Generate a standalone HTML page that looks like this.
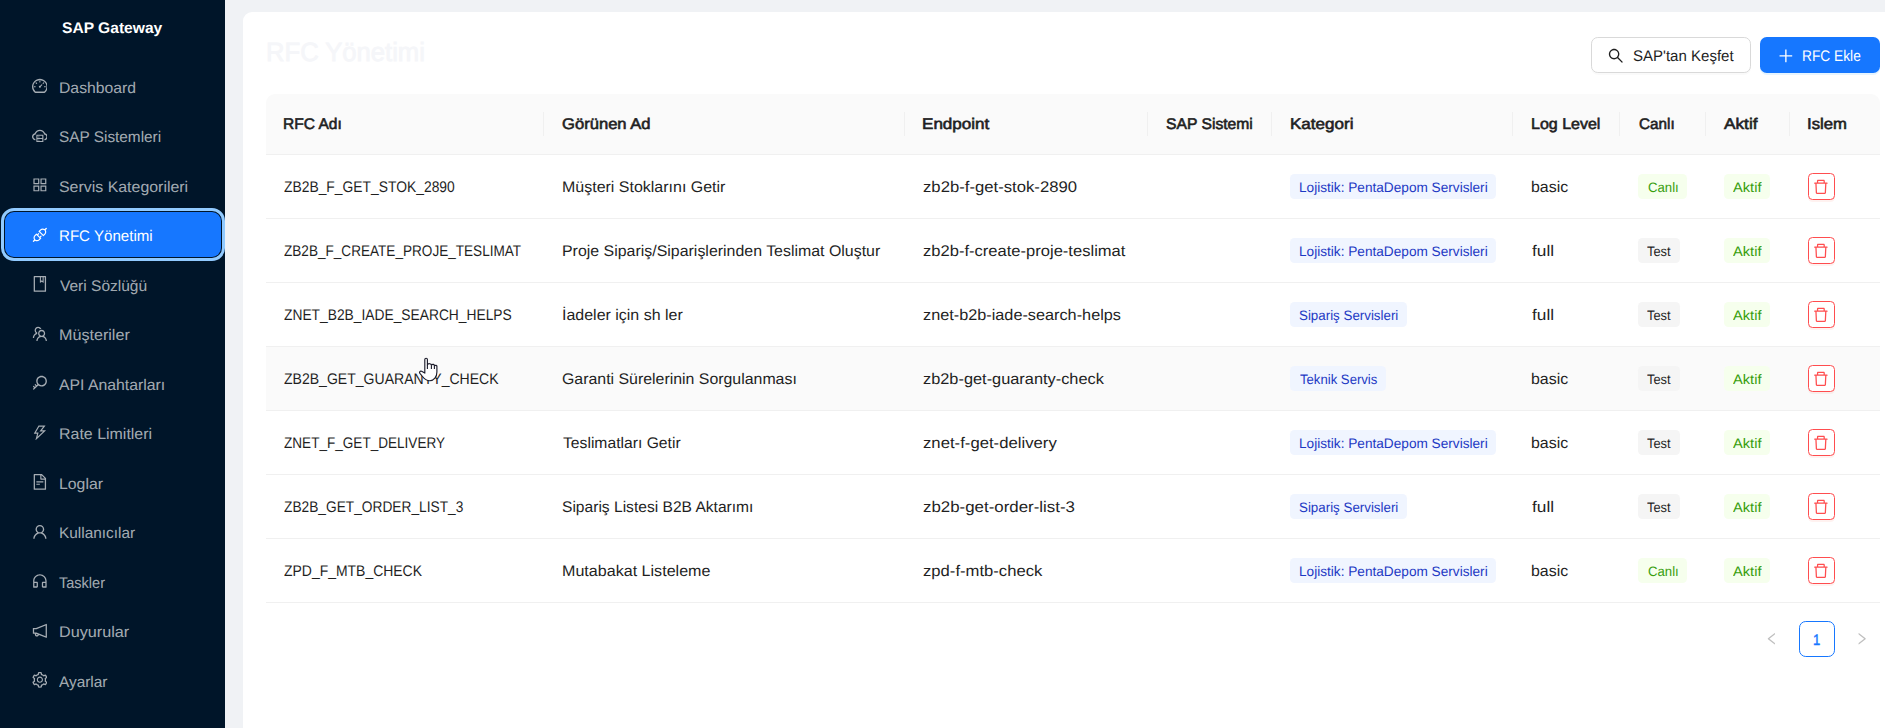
<!DOCTYPE html>
<html lang="tr"><head><meta charset="utf-8"><title>SAP Gateway - RFC Yönetimi</title><style>
*{box-sizing:border-box}
html,body{margin:0;padding:0}
body{width:1885px;height:728px;overflow:hidden;background:#f0f2f5;font-family:"Liberation Sans", sans-serif;position:relative;color:#1f1f1f}
.t{position:absolute;white-space:nowrap;line-height:20px;height:20px;display:block;transform-origin:0 50%;text-rendering:geometricPrecision}
.b{font-size:15.4px}
.h{font-size:15.4px;-webkit-text-stroke:.6px #1f1f1f}
.m{font-size:15.4px;color:rgba(255,255,255,.65)}
.ms{font-size:15.4px;color:#fff}
.lg{font-size:15.4px;font-weight:700;color:#fff}
.tg{font-size:13.7px}
.ti{font-size:26.4px;color:#f5f6f9;-webkit-text-stroke:.8px #f5f6f9;line-height:32px;height:32px}
.bt{font-size:15.4px}
.pg{font-size:15.4px;color:#1677ff;-webkit-text-stroke:.45px #1677ff}
aside{position:absolute;left:0;top:0;width:225px;height:728px;background:#001529}
.mi{position:absolute;left:4.5px;width:216px;height:45px;border-radius:9px}
.mi.sel{background:#1677ff;outline:3.4px solid #91caff;outline-offset:1.1px}
.mi .ic{position:absolute;left:27px;top:14.6px}
main{position:absolute;left:243px;top:12px;width:1700px;height:760px;background:#fff;border-radius:9px}
.btn{position:absolute;top:25px;height:36px;border-radius:6.75px}
.btn.def{left:1348px;width:160px;background:#fff;border:1px solid #d9d9d9;box-shadow:0 2px 0 rgba(0,0,0,.02)}
.btn.pri{left:1517px;width:120px;background:#1677ff;box-shadow:0 2px 0 rgba(5,145,255,.1);color:#fff}
.btn .ic{position:absolute;top:10px}
.tbl{position:absolute;left:23px;top:82px;width:1614px}
.thead{position:absolute;left:0;top:0;width:1614px;height:61px;background:#fafafa;border-bottom:1px solid #f0f0f0;border-radius:9px 9px 0 0}
.sep{position:absolute;top:18px;width:1px;height:24px;background:#f0f0f0}
.tr{position:absolute;left:0;width:1614px;height:64px;border-bottom:1px solid #f0f0f0}
.tr.hov{background:#fafafa}
.tag{position:absolute;top:19px;height:25px;border-radius:4.5px}
.tag.gb{background:#f0f5ff;color:#1d39c4}
.tag.gr{background:#f6ffed;color:#389e0d}
.tag.df{background:#f5f5f5;color:#1f1f1f}
.del{position:absolute;left:1542px;top:18px;width:27px;height:27px;border:1px solid #ff4d4f;border-radius:4.5px;background:#fff;box-shadow:0 2px 0 rgba(255,38,5,.06)}
.del .ic{position:absolute;left:4.1px;top:5.1px}
.pag{position:absolute;top:609px;left:1511px;width:126px;height:36px}
.pag .cur{position:absolute;left:45px;top:0;width:36px;height:36px;border:1px solid #1677ff;border-radius:6.75px;background:#fff}
.pag .ic{position:absolute;top:10.85px}
.cursor{position:absolute;left:175px;top:345px}
</style></head><body><aside><div class="logo"><span class="t lg" id="logo" style="left:62.00px;top:19.00px;transform:scaleX(1.0133);">SAP Gateway</span></div><nav><div class="mi" style="top:63.5px"><svg class="ic" viewBox="64 64 896 896" width="15.75" height="15.75" fill="rgba(255,255,255,.65)" style="" aria-hidden="true"><path d="M924.8 385.600a446.700 446.700 0 00-96-142.400 446.700 446.700 0 00-142.400-96C631.100 123.800 572.500 112 512 112s-119.100 11.800-174.400 35.200a446.700 446.700 0 00-142.400 96 446.700 446.700 0 00-96 142.400C75.800 440.900 64 499.500 64 560c0 132.700 58.300 257.700 159.900 343.100l1.700 1.400c5.800 4.800 13.100 7.500 20.600 7.500h531.700c7.500 0 14.800-2.700 20.600-7.500l1.700-1.400C901.700 817.700 960 692.700 960 560c0-60.500-11.900-119.100-35.200-174.400zM761.400 836H262.600A371.120 371.120 0 01140 560c0-99.400 38.700-192.800 109-263 70.300-70.300 163.700-109 263-109 99.400 0 192.800 38.700 263 109 70.300 70.300 109 163.700 109 263 0 105.600-44.500 205.500-122.600 276zM623.500 421.500a8.030 8.030 0 00-11.300 0L527.700 506c-18.700-5-39.400-.2-54.100 14.500a55.950 55.950 0 000 79.200 55.950 55.950 0 0079.200 0 55.870 55.870 0 0014.500-54.100l84.500-84.500c3.100-3.100 3.100-8.200 0-11.300l-28.300-28.300zM490 320h44c4.400 0 8-3.600 8-8v-80c0-4.400-3.600-8-8-8h-44c-4.400 0-8 3.600-8 8v80c0 4.400 3.600 8 8 8zm260 218v44c0 4.400 3.600 8 8 8h80c4.400 0 8-3.600 8-8v-44c0-4.400-3.600-8-8-8h-80c-4.400 0-8 3.600-8 8zm12.700-197.200l-31.100-31.100a8.030 8.030 0 00-11.300 0l-56.600 56.600a8.030 8.030 0 000 11.300l31.100 31.100c3.100 3.100 8.200 3.100 11.300 0l56.600-56.600c3.100-3.100 3.100-8.200 0-11.300zm-458.600-31.100a8.030 8.030 0 00-11.300 0l-31.100 31.100a8.030 8.030 0 000 11.300l56.600 56.600c3.100 3.100 8.200 3.100 11.300 0l31.100-31.100c3.100-3.100 3.100-8.200 0-11.300l-56.600-56.600zM262 530h-80c-4.400 0-8 3.600-8 8v44c0 4.400 3.600 8 8 8h80c4.400 0 8-3.600 8-8v-44c0-4.400-3.600-8-8-8z"/></svg><span class="t m" id="m0" style="left:54.50px;top:15.50px;transform:scaleX(1.0230);">Dashboard</span></div><div class="mi" style="top:113.0px"><svg class="ic" viewBox="64 64 896 896" width="15.75" height="15.75" fill="rgba(255,255,255,.65)" style="" aria-hidden="true"><path d="M704 446H320c-4.400 0-8 3.600-8 8v402c0 4.400 3.600 8 8 8h384c4.400 0 8-3.600 8-8V454c0-4.400-3.600-8-8-8zm-328 64h272v117H376V510zm272 290H376V683h272v117z"/><path d="M424 748a32 32 0 1064 0 32 32 0 10-64 0zm0-178a32 32 0 1064 0 32 32 0 10-64 0z"/><path d="M811.400 368.900C765.600 248 648.900 162 512.200 162S258.800 247.900 213 368.800C126.900 391.500 63.500 470.200 64 563.600 64.600 668 145.600 752.900 247.600 762c4.700.4 8.700-3.300 8.700-8v-60.400c0-4-3-7.400-7-7.900-27-3.400-52.500-15.200-72.100-34.500-24-23.500-37.200-55.100-37.200-88.600 0-28 9.100-54.400 26.200-76.400 16.700-21.400 40.200-36.900 66.100-43.700l37.900-10 13.900-36.700c8.600-22.800 20.600-44.200 35.700-63.500 14.900-19.200 32.600-36 52.400-50 41.100-28.900 89.500-44.200 140-44.200s98.900 15.300 140 44.300c19.900 14 37.500 30.800 52.400 50 15.100 19.300 27.100 40.700 35.700 63.500l13.800 36.600 37.800 10c54.200 14.400 92.100 63.700 92.100 120 0 33.600-13.200 65.100-37.200 88.600-19.500 19.200-44.900 31.100-71.900 34.500-4 .5-6.900 3.900-6.900 7.900V754c0 4.700 4.100 8.400 8.800 8 101.700-9.200 182.500-94 183.200-198.200.6-93.400-62.700-172.100-148.600-194.900z"/></svg><span class="t m" id="m1" style="left:54.50px;top:15.00px;transform:scaleX(0.9980);">SAP Sistemleri</span></div><div class="mi" style="top:162.5px"><svg class="ic" viewBox="64 64 896 896" width="15.75" height="15.75" fill="rgba(255,255,255,.65)" style="" aria-hidden="true"><path d="M464 144H160c-8.800 0-16 7.200-16 16v304c0 8.800 7.200 16 16 16h304c8.800 0 16-7.200 16-16V160c0-8.800-7.200-16-16-16zm-52 268H212V212h200v200zm452-268H560c-8.800 0-16 7.200-16 16v304c0 8.800 7.200 16 16 16h304c8.800 0 16-7.200 16-16V160c0-8.800-7.200-16-16-16zm-52 268H612V212h200v200zM464 544H160c-8.800 0-16 7.200-16 16v304c0 8.800 7.200 16 16 16h304c8.800 0 16-7.200 16-16V560c0-8.800-7.200-16-16-16zm-52 268H212V612h200v200zm452-268H560c-8.800 0-16 7.200-16 16v304c0 8.800 7.200 16 16 16h304c8.800 0 16-7.200 16-16V560c0-8.800-7.200-16-16-16zm-52 268H612V612h200v200z"/></svg><span class="t m" id="m2" style="left:54.50px;top:15.50px;transform:scaleX(1.0341);">Servis Kategorileri</span></div><div class="mi sel" style="top:212.0px"><svg class="ic" viewBox="64 64 896 896" width="15.75" height="15.75" fill="#fff" style="" aria-hidden="true"><path d="M917.700 148.800l-42.400-42.400c-1.600-1.600-3.600-2.300-5.700-2.300s-4.100.8-5.700 2.300l-76.100 76.100a199.270 199.270 0 00-112.100-34.300c-51.200 0-102.400 19.500-141.500 58.600L432.300 308.700a8.030 8.030 0 000 11.300L704 591.700c1.600 1.600 3.600 2.300 5.700 2.300 2 0 4.100-.8 5.700-2.300l101.900-101.900c68.900-69 77-175.700 24.300-253.500l76.100-76.100c3.100-3.200 3.100-8.300 0-11.400zM769.100 441.700l-59.400 59.400-186.800-186.800 59.400-59.400c24.900-24.900 58.100-38.700 93.400-38.700 35.300 0 68.400 13.700 93.400 38.700 24.900 24.900 38.700 58.100 38.700 93.400 0 35.300-13.800 68.400-38.700 93.400zm-190.200 105a8.030 8.030 0 00-11.300 0L501 613.300 410.700 523l66.700-66.700c3.100-3.100 3.100-8.200 0-11.300L441 408.600a8.030 8.030 0 00-11.300 0L363 475.300l-43-43a7.850 7.850 0 00-5.700-2.300c-2 0-4.100.8-5.700 2.300L206.800 534.200c-68.900 69-77 175.700-24.300 253.500l-76.100 76.100a8.030 8.030 0 000 11.300l42.400 42.400c1.600 1.600 3.600 2.300 5.700 2.300s4.100-.8 5.700-2.300l76.100-76.100c33.700 22.900 72.900 34.300 112.100 34.300 51.200 0 102.400-19.500 141.500-58.600l101.900-101.900c3.100-3.100 3.100-8.200 0-11.300l-43-43 66.700-66.700c3.100-3.100 3.100-8.200 0-11.300l-36.600-36.200zM441.700 769.100a131.320 131.320 0 01-93.400 38.700c-35.300 0-68.400-13.700-93.400-38.700a131.320 131.320 0 01-38.700-93.400c0-35.300 13.700-68.400 38.700-93.400l59.400-59.400 186.800 186.800-59.400 59.400z"/></svg><span class="t ms" id="m3" style="left:54.50px;top:15.00px;transform:scaleX(0.9808);">RFC Yönetimi</span></div><div class="mi" style="top:261.5px"><svg class="ic" viewBox="64 64 896 896" width="15.75" height="15.75" fill="rgba(255,255,255,.65)" style="" aria-hidden="true"><path d="M832 64H192c-17.700 0-32 14.300-32 32v832c0 17.700 14.300 32 32 32h640c17.700 0 32-14.300 32-32V96c0-17.700-14.300-32-32-32zm-260 72h96v209.900L621.500 312 572 347.400V136zm220 752H232V136h280v296.900c0 3.300 1 6.600 3 9.300a15.900 15.900 0 0022.300 3.700l83.800-59.900 81.400 59.400c2.700 2 6 3.100 9.400 3.100 8.800 0 16-7.200 16-16V136h64v752z"/></svg><span class="t m" id="m4" style="left:55.50px;top:15.50px;transform:scaleX(1.0081);">Veri Sözlüğü</span></div><div class="mi" style="top:311.0px"><svg class="ic" viewBox="64 64 896 896" width="15.75" height="15.75" fill="rgba(255,255,255,.65)" style="" aria-hidden="true"><path d="M824.200 699.900a301.550 301.550 0 00-86.400-60.400C783.100 602.800 812 546.800 812 484c0-110.800-92.400-201.700-203.200-200-109.100 1.700-197 90.600-197 200 0 62.800 29 118.800 74.200 155.500a300.950 300.950 0 00-86.400 60.400C345 754.600 314 826.800 312 903.800a8 8 0 008 8.200h56c4.300 0 7.900-3.400 8-7.700 1.900-58 25.400-112.300 66.700-153.500A226.620 226.620 0 01612 684c60.900 0 118.200 23.700 161.300 66.800C814.500 792 838 846.300 840 904.300c.1 4.300 3.700 7.700 8 7.700h56a8 8 0 008-8.200c-2-77-33-149.200-87.800-203.900zM612 612c-34.200 0-66.400-13.300-90.500-37.500a126.860 126.860 0 01-37.500-91.800c.3-32.800 13.400-64.500 36.300-88 24-24.600 56.100-38.300 90.400-38.700 33.900-.3 66.800 12.900 91 36.600 24.800 24.300 38.400 56.800 38.400 91.400 0 34.200-13.300 66.300-37.500 90.500A127.300 127.300 0 01612 612zM361.500 510.400c-.9-8.700-1.400-17.500-1.400-26.400 0-15.900 1.500-31.400 4.300-46.500.7-3.600-1.200-7.300-4.500-8.800-13.600-6.100-26.100-14.500-36.900-25.100a127.540 127.540 0 01-38.700-95.400c.9-32.100 13.800-62.600 36.300-85.600 24.700-25.300 57.900-39.100 93.200-38.700 31.900.3 62.700 12.600 86 34.400 7.900 7.400 14.700 15.600 20.400 24.400 2 3.100 5.900 4.400 9.300 3.200 17.600-6.100 36.200-10.400 55.300-12.400 5.600-.6 8.800-6.600 6.300-11.600-32.500-64.300-98.900-108.700-175.700-109.900-110.900-1.700-203.300 89.200-203.300 199.900 0 62.800 28.900 118.800 74.200 155.500-31.800 14.700-61.100 35-86.500 60.400-54.800 54.700-85.800 126.900-87.800 204a8 8 0 008 8.200h56.100c4.300 0 7.900-3.400 8-7.700 1.900-58 25.400-112.300 66.700-153.500 29.400-29.400 65.400-49.800 104.700-59.700 3.900-1 6.500-4.700 6-8.700z"/></svg><span class="t m" id="m5" style="left:54.50px;top:15.00px;transform:scaleX(1.0478);">Müşteriler</span></div><div class="mi" style="top:360.5px"><svg class="ic" viewBox="64 64 896 896" width="15.75" height="15.75" fill="rgba(255,255,255,.65)" style="" aria-hidden="true"><path d="M608 112c-167.900 0-304 136.100-304 304 0 70.300 23.900 135 63.900 186.500l-41.100 41.100-62.300-62.300a8.150 8.150 0 00-11.400 0l-39.800 39.800a8.150 8.150 0 000 11.400l62.300 62.300-44.900 44.900-62.300-62.300a8.150 8.150 0 00-11.400 0l-39.800 39.800a8.150 8.150 0 000 11.400l62.300 62.300-65.300 65.300a8.030 8.030 0 000 11.300l42.300 42.300c3.100 3.100 8.200 3.100 11.300 0l253.600-253.600A304.060 304.060 0 00608 720c167.900 0 304-136.100 304-304S775.900 112 608 112zm161.200 465.200C726.200 620.300 668.900 644 608 644c-60.900 0-118.200-23.700-161.200-66.800-43.100-43-66.800-100.300-66.800-161.200 0-60.900 23.700-118.200 66.800-161.200 43-43.100 100.300-66.800 161.200-66.800 60.900 0 118.200 23.700 161.200 66.800 43.100 43 66.800 100.300 66.800 161.200 0 60.900-23.700 118.200-66.800 161.200z"/></svg><span class="t m" id="m6" style="left:54.90px;top:15.50px;transform:scaleX(1.0253);">API Anahtarları</span></div><div class="mi" style="top:410.0px"><svg class="ic" viewBox="64 64 896 896" width="15.75" height="15.75" fill="rgba(255,255,255,.65)" style="" aria-hidden="true"><path d="M848 359.300H627.700L825.800 109c4.100-5.300.4-13-6.300-13H436c-2.800 0-5.500 1.500-6.900 4L170 547.500c-3.100 5.300.7 12 6.900 12h174.400l-89.400 357.600c-1.900 7.800 7.500 13.300 13.300 7.700L853.500 373c5.200-4.900 1.700-13.700-5.500-13.700zM378.200 732.500l60.300-241H281.100l189.600-327.400h224.600L487 427.400h211L378.200 732.500z"/></svg><span class="t m" id="m7" style="left:54.50px;top:15.00px;transform:scaleX(1.0365);">Rate Limitleri</span></div><div class="mi" style="top:459.5px"><svg class="ic" viewBox="64 64 896 896" width="15.75" height="15.75" fill="rgba(255,255,255,.65)" style="" aria-hidden="true"><path d="M854.600 288.600L639.400 73.400c-6-6-14.100-9.400-22.600-9.400H192c-17.700 0-32 14.300-32 32v832c0 17.700 14.300 32 32 32h640c17.700 0 32-14.300 32-32V311.300c0-8.500-3.400-16.700-9.400-22.700zM790.200 326H602V137.800L790.200 326zm1.800 562H232V136h302v216a42 42 0 0042 42h216v494zM504 618H320c-4.400 0-8 3.600-8 8v48c0 4.400 3.600 8 8 8h184c4.400 0 8-3.600 8-8v-48c0-4.400-3.600-8-8-8zM312 490v48c0 4.400 3.600 8 8 8h384c4.400 0 8-3.600 8-8v-48c0-4.400-3.600-8-8-8H320c-4.400 0-8 3.600-8 8z"/></svg><span class="t m" id="m8" style="left:54.50px;top:15.50px;transform:scaleX(1.0288);">Loglar</span></div><div class="mi" style="top:509.0px"><svg class="ic" viewBox="64 64 896 896" width="15.75" height="15.75" fill="rgba(255,255,255,.65)" style="" aria-hidden="true"><path d="M858.500 763.600a374 374 0 00-80.600-119.500 375.630 375.630 0 00-119.500-80.600c-.4-.2-.8-.3-1.200-.5C719.500 518 760 444.700 760 362c0-137-111-248-248-248S264 225 264 362c0 82.700 40.500 156 102.800 201.100-.4.200-.8.300-1.200.5-44.800 18.900-85 46-119.500 80.600a375.630 375.630 0 00-80.600 119.500A371.700 371.700 0 00136 901.800a8 8 0 008 8.200h60c4.400 0 7.900-3.500 8-7.800 2-77.200 33-149.500 87.800-204.300 56.700-56.700 132-87.900 212.200-87.900s155.500 31.200 212.200 87.900C779 752.700 810 825 812 902.200c.1 4.400 3.600 7.800 8 7.800h60a8 8 0 008-8.200c-1-47.800-10.900-94.300-29.500-138.200zM512 534c-45.900 0-89.100-17.900-121.600-50.400S340 407.900 340 362c0-45.900 17.900-89.100 50.400-121.600S466.100 190 512 190s89.100 17.900 121.600 50.400S684 316.100 684 362c0 45.900-17.900 89.100-50.400 121.600S557.900 534 512 534z"/></svg><span class="t m" id="m9" style="left:54.50px;top:15.00px;transform:scaleX(1.0002);">Kullanıcılar</span></div><div class="mi" style="top:558.5px"><svg class="ic" viewBox="64 64 896 896" width="15.75" height="15.75" fill="rgba(255,255,255,.65)" style="" aria-hidden="true"><path d="M512 128c-212.100 0-384 171.900-384 384v360c0 13.300 10.700 24 24 24h184c35.300 0 64-28.700 64-64V624c0-35.300-28.700-64-64-64H200v-48c0-172.300 139.700-312 312-312s312 139.700 312 312v48H688c-35.300 0-64 28.700-64 64v208c0 35.300 28.700 64 64 64h184c13.300 0 24-10.700 24-24V512c0-212.100-171.900-384-384-384zM328 632v192H200V632h128zm496 192H696V632h128v192z"/></svg><span class="t m" id="m10" style="left:54.90px;top:15.50px;transform:scaleX(0.9429);">Taskler</span></div><div class="mi" style="top:608.0px"><svg class="ic" viewBox="64 64 896 896" width="15.75" height="15.75" fill="rgba(255,255,255,.65)" style="" aria-hidden="true"><path d="M880 112c-3.800 0-7.700.7-11.600 2.300L292 345.900H128c-8.800 0-16 7.400-16 16.600v299c0 9.200 7.200 16.600 16 16.600h101.700c-3.700 11.600-5.700 23.900-5.700 36.400 0 65.900 53.800 119.500 120 119.500 55.400 0 102.100-37.600 115.900-88.400l408.600 164.200c3.900 1.500 7.800 2.300 11.600 2.300 16.900 0 32-14.200 32-33.200V145.200C912 126.200 897 112 880 112zM344 762.300c-26.500 0-48-21.400-48-47.800 0-11.200 3.900-21.900 11-30.400l84.900 34.100c-2 24.600-22.700 44.100-47.900 44.100zm496 58.400L318.800 611.300l-12.900-5.200H184V417.900h121.900l12.900-5.200L840 203.300v617.400z"/></svg><span class="t m" id="m11" style="left:54.50px;top:15.00px;transform:scaleX(1.0515);">Duyurular</span></div><div class="mi" style="top:657.5px"><svg class="ic" viewBox="64 64 896 896" width="15.75" height="15.75" fill="rgba(255,255,255,.65)" style="" aria-hidden="true"><path d="M924.800 625.700l-65.500-56c3.100-19 4.700-38.400 4.700-57.800s-1.600-38.800-4.700-57.800l65.500-56a32.030 32.030 0 009.300-35.200l-.9-2.600a442.270 442.270 0 00-79.700-137.900l-1.800-2.100a32.120 32.120 0 00-35.100-9.500l-81.300 28.900c-30-24.600-63.500-44-99.700-57.600l-15.700-85a32.050 32.050 0 00-25.800-25.700l-2.700-.5c-52.100-9.400-106.900-9.400-159 0l-2.700.5a32.050 32.050 0 00-25.800 25.700l-15.800 85.400a351.860 351.860 0 00-99 57.400l-81.900-29.100a32 32 0 00-35.100 9.500l-1.800 2.100a446.020 446.020 0 00-79.700 137.900l-.9 2.600c-4.500 12.500-.8 26.500 9.300 35.200l66.300 56.600c-3.100 18.800-4.600 38-4.600 57.100 0 19.200 1.500 38.400 4.600 57.100L99 625.500a32.030 32.030 0 00-9.300 35.200l.9 2.600c18.100 50.400 44.900 96.900 79.700 137.900l1.800 2.100a32.120 32.120 0 0035.100 9.500l81.900-29.100c29.800 24.500 63.100 43.900 99 57.400l15.800 85.400a32.050 32.050 0 0025.800 25.700l2.700.5a449.400 449.400 0 00159 0l2.700-.5a32.050 32.050 0 0025.800-25.700l15.700-85a350 350 0 0099.700-57.600l81.300 28.900a32 32 0 0035.100-9.500l1.800-2.100c34.800-41.100 61.600-87.500 79.700-137.900l.9-2.600c4.500-12.300.8-26.300-9.300-35zM788.300 465.900c2.500 15.100 3.800 30.600 3.800 46.100s-1.300 31-3.800 46.100l-6.600 40.100 74.700 63.900a370.030 370.030 0 01-42.600 73.600L721 702.800l-31.400 25.800c-23.900 19.600-50.500 35-79.300 45.800l-38.100 14.300-17.900 97a377.500 377.500 0 01-85 0l-17.900-97.200-37.800-14.500c-28.500-10.800-55-26.200-78.700-45.700l-31.400-25.900-93.400 33.200c-17-22.900-31.200-47.600-42.600-73.600l75.500-64.500-6.500-40c-2.400-14.900-3.700-30.300-3.700-45.500 0-15.300 1.200-30.600 3.700-45.500l6.500-40-75.500-64.500c11.300-26.100 25.600-50.700 42.600-73.600l93.400 33.200 31.400-25.900c23.700-19.500 50.200-34.900 78.700-45.700l37.900-14.300 17.900-97.200c28.100-3.200 56.800-3.200 85 0l17.900 97 38.100 14.300c28.700 10.800 55.400 26.200 79.300 45.800l31.400 25.800 92.800-32.900c17 22.900 31.200 47.600 42.600 73.600L781.800 426l6.500 39.900zM512 326c-97.200 0-176 78.800-176 176s78.800 176 176 176 176-78.800 176-176-78.800-176-176-176zm79.200 255.200A111.600 111.600 0 01512 614c-29.900 0-58-11.700-79.200-32.800A111.600 111.600 0 01400 502c0-29.900 11.700-58 32.800-79.200C454 401.600 482.100 390 512 390c29.900 0 58 11.600 79.200 32.800A111.600 111.600 0 01624 502c0 29.900-11.700 58-32.800 79.200z"/></svg><span class="t m" id="m12" style="left:54.90px;top:15.50px;transform:scaleX(1.0002);">Ayarlar</span></div></nav></aside><main><span class="t ti" id="title" style="left:22.60px;top:24.01px;transform:scaleX(0.9702);">RFC Yönetimi</span><div class="btn def"><svg class="ic" viewBox="64 64 896 896" width="15.75" height="15.75" fill="#1f1f1f" style="left:15.65px" aria-hidden="true"><path d="M909.600 854.500L649.900 594.800C690.200 542.700 712 479 712 412c0-80.200-31.300-155.400-87.900-212.100-56.600-56.700-132-87.900-212.100-87.900s-155.500 31.300-212.100 87.900C143.200 256.500 112 331.800 112 412c0 80.100 31.300 155.500 87.900 212.100C256.500 680.800 331.800 712 412 712c67 0 130.600-21.800 182.700-62l259.700 259.600a8.200 8.200 0 0011.600 0l43.600-43.500a8.200 8.200 0 000-11.600zM570.400 570.400C528 612.700 471.800 636 412 636s-116-23.300-158.400-65.600C211.300 528 188 471.800 188 412s23.300-116.100 65.600-158.400C296 211.300 352.200 188 412 188s116.100 23.200 158.400 65.600S636 352.200 636 412s-23.300 116.100-65.600 158.400z"/></svg><span class="t bt" id="b1" style="left:42.00px;top:10.00px;transform:scaleX(0.9765);margin:-1px 0 0 -1px">SAP'tan Keşfet</span></div><div class="btn pri"><svg class="ic" viewBox="64 64 896 896" width="15.75" height="15.75" fill="#fff" style="left:17.6px;top:10.8px" aria-hidden="true"><path d="M482 152h60q8 0 8 8v704q0 8-8 8h-60q-8 0-8-8V160q0-8 8-8z"/><path d="M192 474h672q8 0 8 8v60q0 8-8 8H160q-8 0-8-8v-60q0-8 8-8z"/></svg><span class="t bt" id="b2" style="left:42.00px;top:10.00px;transform:scaleX(0.8926);color:#fff">RFC Ekle</span></div><div class="tbl"><div class="thead"><span class="t h" id="h0" style="left:17.00px;top:21.00px;transform:scaleX(1.0102);">RFC Adı</span><i class="sep" style="left:277.0px"></i><span class="t h" id="h1" style="left:295.80px;top:21.00px;transform:scaleX(1.0784);">Görünen Ad</span><i class="sep" style="left:638.0px"></i><span class="t h" id="h2" style="left:656.00px;top:21.00px;transform:scaleX(1.1084);">Endpoint</span><i class="sep" style="left:881.0px"></i><span class="t h" id="h3" style="left:899.60px;top:21.00px;transform:scaleX(1.0188);">SAP Sistemi</span><i class="sep" style="left:1005.0px"></i><span class="t h" id="h4" style="left:1024.00px;top:21.00px;transform:scaleX(1.1073);">Kategori</span><i class="sep" style="left:1246.0px"></i><span class="t h" id="h5" style="left:1265.00px;top:21.00px;transform:scaleX(1.0397);">Log Level</span><i class="sep" style="left:1353.0px"></i><span class="t h" id="h6" style="left:1372.50px;top:21.00px;transform:scaleX(0.9922);">Canlı</span><i class="sep" style="left:1439.0px"></i><span class="t h" id="h7" style="left:1457.80px;top:21.00px;transform:scaleX(1.1200);">Aktif</span><i class="sep" style="left:1522.5px"></i><span class="t h" id="h8" style="left:1541.00px;top:21.00px;transform:scaleX(1.0836);">Islem</span></div><div class="tr" style="top:61px"><span class="t b" id="r0a" style="left:17.50px;top:23.00px;transform:scaleX(0.9006);">ZB2B_F_GET_STOK_2890</span><span class="t b" id="r0b" style="left:296.00px;top:23.00px;transform:scaleX(1.0382);">Müşteri Stoklarını Getir</span><span class="t b" id="r0c" style="left:657.00px;top:23.00px;transform:scaleX(1.0845);">zb2b-f-get-stok-2890</span><span class="tag gb" style="left:1024px;width:206.0px"><span class="t tg" id="r0d" style="left:9.00px;top:4.00px;transform:scaleX(0.9960);">Lojistik: PentaDepom Servisleri</span></span><span class="t b" id="r0e" style="left:1264.60px;top:23.00px;transform:scaleX(1.0355);">basic</span><span class="tag gr" style="left:1372.2px;width:48.4px"><span class="t tg" id="r0f" style="left:10.00px;top:4.00px;transform:scaleX(0.9627);">Canlı</span></span><span class="tag gr" style="left:1458.2px;width:45.8px"><span class="t tg" id="r0g" style="left:8.80px;top:4.00px;transform:scaleX(1.0698);">Aktif</span></span><span class="del"><svg class="ic" viewBox="64 64 896 896" width="15.75" height="15.75" fill="#ff4d4f" style="" aria-hidden="true"><path d="M360 184h-8c4.400 0 8-3.600 8-8v8h304v-8c0 4.400 3.600 8 8 8h-8v72h72v-80c0-35.300-28.700-64-64-64H352c-35.300 0-64 28.700-64 64v80h72v-72zm504 72H160c-17.700 0-32 14.300-32 32v32c0 4.400 3.600 8 8 8h60.400l24.700 523c1.600 34.100 29.800 61 63.900 61h454c34.200 0 62.300-26.800 63.900-61l24.700-523H888c4.400 0 8-3.600 8-8v-32c0-17.700-14.300-32-32-32zM731.300 840H292.700l-24.200-512h487l-24.200 512z"/></svg></span></div><div class="tr" style="top:125px"><span class="t b" id="r1a" style="left:17.50px;top:23.00px;transform:scaleX(0.8821);">ZB2B_F_CREATE_PROJE_TESLIMAT</span><span class="t b" id="r1b" style="left:296.00px;top:23.00px;transform:scaleX(1.0345);">Proje Sipariş/Siparişlerinden Teslimat Oluştur</span><span class="t b" id="r1c" style="left:657.00px;top:23.00px;transform:scaleX(1.0756);">zb2b-f-create-proje-teslimat</span><span class="tag gb" style="left:1024px;width:206.0px"><span class="t tg" id="r1d" style="left:9.00px;top:4.00px;transform:scaleX(0.9960);">Lojistik: PentaDepom Servisleri</span></span><span class="t b" id="r1e" style="left:1265.60px;top:23.00px;transform:scaleX(1.1200);">full</span><span class="tag df" style="left:1372.2px;width:41.6px"><span class="t tg" id="r1f" style="left:9.00px;top:4.00px;transform:scaleX(0.9386);">Test</span></span><span class="tag gr" style="left:1458.2px;width:45.8px"><span class="t tg" id="r1g" style="left:8.80px;top:4.00px;transform:scaleX(1.0698);">Aktif</span></span><span class="del"><svg class="ic" viewBox="64 64 896 896" width="15.75" height="15.75" fill="#ff4d4f" style="" aria-hidden="true"><path d="M360 184h-8c4.400 0 8-3.600 8-8v8h304v-8c0 4.400 3.600 8 8 8h-8v72h72v-80c0-35.300-28.700-64-64-64H352c-35.300 0-64 28.700-64 64v80h72v-72zm504 72H160c-17.700 0-32 14.300-32 32v32c0 4.400 3.600 8 8 8h60.400l24.700 523c1.600 34.100 29.800 61 63.900 61h454c34.200 0 62.300-26.800 63.900-61l24.700-523H888c4.400 0 8-3.600 8-8v-32c0-17.700-14.300-32-32-32zM731.300 840H292.700l-24.200-512h487l-24.200 512z"/></svg></span></div><div class="tr" style="top:189px"><span class="t b" id="r2a" style="left:17.50px;top:23.00px;transform:scaleX(0.8964);">ZNET_B2B_IADE_SEARCH_HELPS</span><span class="t b" id="r2b" style="left:296.00px;top:23.00px;transform:scaleX(1.0379);">İadeler için sh ler</span><span class="t b" id="r2c" style="left:657.00px;top:23.00px;transform:scaleX(1.0566);">znet-b2b-iade-search-helps</span><span class="tag gb" style="left:1024px;width:117.0px"><span class="t tg" id="r2d" style="left:9.00px;top:4.00px;transform:scaleX(0.9746);">Sipariş Servisleri</span></span><span class="t b" id="r2e" style="left:1265.60px;top:23.00px;transform:scaleX(1.1200);">full</span><span class="tag df" style="left:1372.2px;width:41.6px"><span class="t tg" id="r2f" style="left:9.00px;top:4.00px;transform:scaleX(0.9386);">Test</span></span><span class="tag gr" style="left:1458.2px;width:45.8px"><span class="t tg" id="r2g" style="left:8.80px;top:4.00px;transform:scaleX(1.0698);">Aktif</span></span><span class="del"><svg class="ic" viewBox="64 64 896 896" width="15.75" height="15.75" fill="#ff4d4f" style="" aria-hidden="true"><path d="M360 184h-8c4.400 0 8-3.600 8-8v8h304v-8c0 4.400 3.600 8 8 8h-8v72h72v-80c0-35.300-28.700-64-64-64H352c-35.300 0-64 28.700-64 64v80h72v-72zm504 72H160c-17.700 0-32 14.300-32 32v32c0 4.400 3.600 8 8 8h60.400l24.700 523c1.600 34.100 29.800 61 63.900 61h454c34.200 0 62.300-26.800 63.900-61l24.700-523H888c4.400 0 8-3.600 8-8v-32c0-17.700-14.300-32-32-32zM731.300 840H292.700l-24.200-512h487l-24.200 512z"/></svg></span></div><div class="tr hov" style="top:253px"><span class="t b" id="r3a" style="left:17.50px;top:23.00px;transform:scaleX(0.9124);">ZB2B_GET_GUARANTY_CHECK</span><span class="t b" id="r3b" style="left:296.00px;top:23.00px;transform:scaleX(1.0318);">Garanti Sürelerinin Sorgulanması</span><span class="t b" id="r3c" style="left:657.00px;top:23.00px;transform:scaleX(1.0623);">zb2b-get-guaranty-check</span><span class="tag gb" style="left:1024px;width:95.5px"><span class="t tg" id="r3d" style="left:10.00px;top:4.00px;transform:scaleX(0.9594);">Teknik Servis</span></span><span class="t b" id="r3e" style="left:1264.60px;top:23.00px;transform:scaleX(1.0355);">basic</span><span class="tag df" style="left:1372.2px;width:41.6px"><span class="t tg" id="r3f" style="left:9.00px;top:4.00px;transform:scaleX(0.9386);">Test</span></span><span class="tag gr" style="left:1458.2px;width:45.8px"><span class="t tg" id="r3g" style="left:8.80px;top:4.00px;transform:scaleX(1.0698);">Aktif</span></span><span class="del"><svg class="ic" viewBox="64 64 896 896" width="15.75" height="15.75" fill="#ff4d4f" style="" aria-hidden="true"><path d="M360 184h-8c4.400 0 8-3.600 8-8v8h304v-8c0 4.400 3.600 8 8 8h-8v72h72v-80c0-35.300-28.700-64-64-64H352c-35.300 0-64 28.700-64 64v80h72v-72zm504 72H160c-17.700 0-32 14.300-32 32v32c0 4.400 3.600 8 8 8h60.400l24.700 523c1.600 34.100 29.800 61 63.900 61h454c34.200 0 62.300-26.800 63.900-61l24.700-523H888c4.400 0 8-3.600 8-8v-32c0-17.700-14.300-32-32-32zM731.300 840H292.700l-24.200-512h487l-24.200 512z"/></svg></span></div><div class="tr" style="top:317px"><span class="t b" id="r4a" style="left:17.50px;top:23.00px;transform:scaleX(0.8813);">ZNET_F_GET_DELIVERY</span><span class="t b" id="r4b" style="left:297.00px;top:23.00px;transform:scaleX(1.0190);">Teslimatları Getir</span><span class="t b" id="r4c" style="left:657.00px;top:23.00px;transform:scaleX(1.0862);">znet-f-get-delivery</span><span class="tag gb" style="left:1024px;width:206.0px"><span class="t tg" id="r4d" style="left:9.00px;top:4.00px;transform:scaleX(0.9960);">Lojistik: PentaDepom Servisleri</span></span><span class="t b" id="r4e" style="left:1264.60px;top:23.00px;transform:scaleX(1.0355);">basic</span><span class="tag df" style="left:1372.2px;width:41.6px"><span class="t tg" id="r4f" style="left:9.00px;top:4.00px;transform:scaleX(0.9386);">Test</span></span><span class="tag gr" style="left:1458.2px;width:45.8px"><span class="t tg" id="r4g" style="left:8.80px;top:4.00px;transform:scaleX(1.0698);">Aktif</span></span><span class="del"><svg class="ic" viewBox="64 64 896 896" width="15.75" height="15.75" fill="#ff4d4f" style="" aria-hidden="true"><path d="M360 184h-8c4.400 0 8-3.600 8-8v8h304v-8c0 4.400 3.600 8 8 8h-8v72h72v-80c0-35.300-28.700-64-64-64H352c-35.300 0-64 28.700-64 64v80h72v-72zm504 72H160c-17.700 0-32 14.300-32 32v32c0 4.400 3.600 8 8 8h60.400l24.700 523c1.600 34.100 29.800 61 63.900 61h454c34.200 0 62.300-26.800 63.900-61l24.700-523H888c4.400 0 8-3.600 8-8v-32c0-17.700-14.300-32-32-32zM731.300 840H292.700l-24.200-512h487l-24.200 512z"/></svg></span></div><div class="tr" style="top:381px"><span class="t b" id="r5a" style="left:17.50px;top:23.00px;transform:scaleX(0.8920);">ZB2B_GET_ORDER_LIST_3</span><span class="t b" id="r5b" style="left:296.00px;top:23.00px;transform:scaleX(1.0127);">Sipariş Listesi B2B Aktarımı</span><span class="t b" id="r5c" style="left:657.00px;top:23.00px;transform:scaleX(1.0970);">zb2b-get-order-list-3</span><span class="tag gb" style="left:1024px;width:117.0px"><span class="t tg" id="r5d" style="left:9.00px;top:4.00px;transform:scaleX(0.9746);">Sipariş Servisleri</span></span><span class="t b" id="r5e" style="left:1265.60px;top:23.00px;transform:scaleX(1.1200);">full</span><span class="tag df" style="left:1372.2px;width:41.6px"><span class="t tg" id="r5f" style="left:9.00px;top:4.00px;transform:scaleX(0.9386);">Test</span></span><span class="tag gr" style="left:1458.2px;width:45.8px"><span class="t tg" id="r5g" style="left:8.80px;top:4.00px;transform:scaleX(1.0698);">Aktif</span></span><span class="del"><svg class="ic" viewBox="64 64 896 896" width="15.75" height="15.75" fill="#ff4d4f" style="" aria-hidden="true"><path d="M360 184h-8c4.400 0 8-3.600 8-8v8h304v-8c0 4.400 3.600 8 8 8h-8v72h72v-80c0-35.300-28.700-64-64-64H352c-35.300 0-64 28.700-64 64v80h72v-72zm504 72H160c-17.700 0-32 14.300-32 32v32c0 4.400 3.600 8 8 8h60.400l24.700 523c1.600 34.100 29.800 61 63.900 61h454c34.200 0 62.300-26.800 63.900-61l24.700-523H888c4.400 0 8-3.600 8-8v-32c0-17.700-14.300-32-32-32zM731.300 840H292.700l-24.200-512h487l-24.200 512z"/></svg></span></div><div class="tr" style="top:445px"><span class="t b" id="r6a" style="left:17.50px;top:23.00px;transform:scaleX(0.9066);">ZPD_F_MTB_CHECK</span><span class="t b" id="r6b" style="left:296.00px;top:23.00px;transform:scaleX(1.0454);">Mutabakat Listeleme</span><span class="t b" id="r6c" style="left:657.00px;top:23.00px;transform:scaleX(1.0819);">zpd-f-mtb-check</span><span class="tag gb" style="left:1024px;width:206.0px"><span class="t tg" id="r6d" style="left:9.00px;top:4.00px;transform:scaleX(0.9960);">Lojistik: PentaDepom Servisleri</span></span><span class="t b" id="r6e" style="left:1264.60px;top:23.00px;transform:scaleX(1.0355);">basic</span><span class="tag gr" style="left:1372.2px;width:48.4px"><span class="t tg" id="r6f" style="left:10.00px;top:4.00px;transform:scaleX(0.9627);">Canlı</span></span><span class="tag gr" style="left:1458.2px;width:45.8px"><span class="t tg" id="r6g" style="left:8.80px;top:4.00px;transform:scaleX(1.0698);">Aktif</span></span><span class="del"><svg class="ic" viewBox="64 64 896 896" width="15.75" height="15.75" fill="#ff4d4f" style="" aria-hidden="true"><path d="M360 184h-8c4.400 0 8-3.600 8-8v8h304v-8c0 4.400 3.600 8 8 8h-8v72h72v-80c0-35.300-28.700-64-64-64H352c-35.300 0-64 28.700-64 64v80h72v-72zm504 72H160c-17.700 0-32 14.300-32 32v32c0 4.400 3.600 8 8 8h60.400l24.700 523c1.600 34.100 29.800 61 63.900 61h454c34.200 0 62.300-26.800 63.900-61l24.700-523H888c4.400 0 8-3.600 8-8v-32c0-17.700-14.300-32-32-32zM731.300 840H292.700l-24.200-512h487l-24.200 512z"/></svg></span></div></div><div class="pag"><svg class="ic" viewBox="64 64 896 896" width="13.5" height="13.5" fill="#bfbfbf" style="left:11.3px" aria-hidden="true"><path d="M724 218.300V141c0-6.700-7.700-10.400-12.900-6.300L260.300 486.800a31.860 31.860 0 000 50.300l450.800 352.100c5.300 4.100 12.900.4 12.900-6.300v-77.300c0-4.900-2.300-9.600-6.100-12.600l-360-281 360-281.100c3.800-3 6.100-7.700 6.100-12.600z"/></svg><span class="cur"><span class="t pg" id="pg1" style="left:12.50px;top:9.00px;transform:scaleX(0.8500);">1</span></span><svg class="ic" viewBox="64 64 896 896" width="13.5" height="13.5" fill="#bfbfbf" style="left:100.7px" aria-hidden="true"><path d="M765.700 486.800L314.900 134.700A7.970 7.970 0 00302 141v77.300c0 4.900 2.300 9.600 6.100 12.600l360 281.100-360 281.100c-3.900 3-6.100 7.700-6.100 12.600V883c0 6.700 7.700 10.400 12.900 6.300l450.800-352.100a31.960 31.960 0 000-50.400z"/></svg></div><svg class="cursor" width="24" height="28" viewBox="0 0 24 28" aria-hidden="true"><path d="M6.8 13.2V2.500a1.300 1.300 0 0 1 2.600 0V8a2 1.500 0 0 1 4 .4a1.500 1.400 0 0 1 3 .8a1.250 1.300 0 0 1 2.500 1V15c0 5-2.900 8.700-7.100 8.700c-3.800 0-5.800-2.200-7.300-4.200L1.900 16.300c-1-1.300.3-2.700 1.700-2L6.800 16.100z" fill="#fff" stroke="#1b1b2a" stroke-width="1.15" stroke-linejoin="round"/><path d="M9.400 8v3.900M13.400 8.400v3.500M16.400 9.200v2.700" stroke="#1b1b2a" stroke-width="1.100" fill="none"/></svg></main></body></html>
